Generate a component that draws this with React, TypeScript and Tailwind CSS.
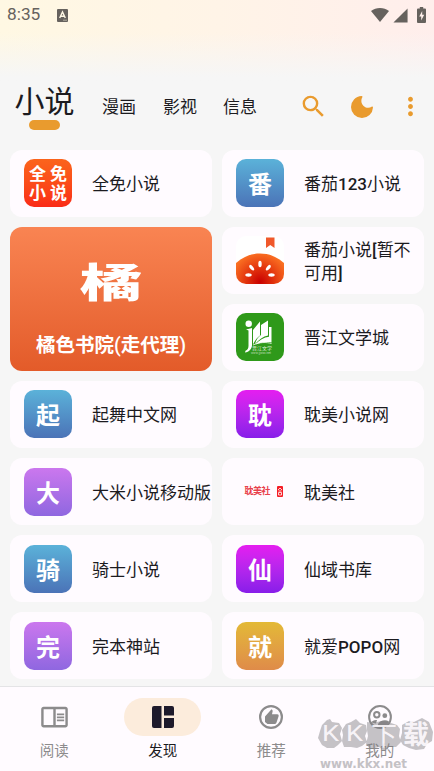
import type { ReactNode } from 'react';
import { MdMoreVert, MdOutlineChromeReaderMode, MdSearch, MdSignalCellular4Bar } from 'react-icons/md';

type Tone = 'blue' | 'magenta' | 'purple' | 'gold';

interface Source {
    // Name is split so that latin parts can use the heavier weight
    name: ReactNode;
    letter?: string;
    tone?: Tone;
    icon?: ReactNode;
}

const TONES: Record<Tone, string> = {
    blue: 'from-[#5bb2d9] to-[#4b73b7]',
    magenta: 'from-[#e51df0] to-[#881de9]',
    purple: 'from-[#cb77ee] to-[#8f67e0]',
    gold: 'from-[#e3b936] to-[#df8b49]',
};

const Latin = ({ children }: { children: ReactNode }) => <span className="font-medium">{children}</span>;

function QuanmianLogo() {
    return (
        <div className="grid size-[48px] grid-cols-2 content-center justify-items-center rounded-[10px] bg-linear-to-b from-[#fb641c] to-[#fa2a17] px-[3px] pt-[2px] text-[17px] leading-[19px] font-bold text-white">
            <span>全</span>
            <span>免</span>
            <span>小</span>
            <span>说</span>
        </div>
    );
}

function TomatoLogo() {
    return (
        <svg viewBox="0 0 48 48" className="size-[48px]">
            <defs>
                <radialGradient id="tomato" cx="24" cy="46" r="30" gradientUnits="userSpaceOnUse">
                    <stop offset="0" stopColor="#c90000" />
                    <stop offset="0.55" stopColor="#e63c10" />
                    <stop offset="1" stopColor="#fb7223" />
                </radialGradient>
                <clipPath id="tile">
                    <rect width="48" height="48" rx="10" />
                </clipPath>
            </defs>
            <g clipPath="url(#tile)">
                <rect width="48" height="48" fill="#fff" />
                <path d="M0 27C8 20 16 17.500 24 17.500S40 20 48 27V48H0Z" fill="url(#tomato)" />
            </g>
            <path d="M30 1.500h8.500v10.500l-4.250-3-4.250 3Z" fill="#f0582a" />
            <g fill="#fff">
                <ellipse cx="24" cy="28" rx="1.700" ry="3.200" />
                <ellipse cx="15.700" cy="31.700" rx="1.600" ry="3.300" transform="rotate(-40 15.700 31.700)" />
                <ellipse cx="32.300" cy="31.700" rx="1.600" ry="3.300" transform="rotate(40 32.300 31.700)" />
                <ellipse cx="12.500" cy="39" rx="3.200" ry="1.700" />
                <ellipse cx="35.500" cy="39" rx="3.200" ry="1.700" />
            </g>
        </svg>
    );
}

function JinjiangLogo() {
    return (
        <svg viewBox="0 0 48 48" className="size-[48px]">
            <rect width="48" height="48" rx="10" fill="#2f991a" />
            <circle cx="12.700" cy="10.800" r="3.200" fill="#fff" />
            <path d="M10 16.500l6-1.500v17c0 4-3 7-7 7.500l.5-1.700c2-.8 3-2.500 3-5V17.500Z" fill="#fff" />
            <path d="M17 17l7-8.500v14c-3 2-5 5-7 9Z" fill="#fff" />
            <path d="M25 12l7-4.500v15c-5 1-9 4-13 8.500 1-4 3-7 6-9Z" fill="#fff" />
            <path d="M33 14h2.500v15.500c-6-1-11 0-16 2C23 27 28 24.500 33 23.800Z" fill="#fff" />
            <path d="M17 32C24 29 30 29 35.500 30.500" fill="none" stroke="#fff" strokeWidth=".8" />
            <text x="16" y="37" fontSize="5" fill="#fff" fillOpacity=".85">晋江文学</text>
            <text x="15" y="40.500" fontSize="3" fill="#fff" fillOpacity=".7" textLength="20">www.jjwxc.net</text>
        </svg>
    );
}

function DanmeisheLogo() {
    return (
        <div className="flex size-[48px] items-center justify-end gap-[6px] pr-[1.500px]">
            <span className="w-[26px] text-[9px] leading-none font-bold tracking-[-0.500px] whitespace-nowrap text-[#e8414b]">
                耽美社
            </span>
            <svg viewBox="0 0 6 11" className="h-[11px] w-[6px]">
                <rect width="6" height="11" rx="1" fill="#f51d25" />
                <path d="M1 4l2-2 2 2M1.500 5h3M1.500 6.500h3v2.500h-3Z" fill="none" stroke="#fff" strokeWidth=".8" />
            </svg>
        </div>
    );
}

const ROWS: Source[] = [
    { name: '全免小说', icon: <QuanmianLogo /> },
    { name: <>番茄<Latin>123</Latin>小说</>, letter: '番', tone: 'blue' },
    { name: <>番茄小说<Latin>[</Latin>暂不可用<Latin>]</Latin></>, icon: <TomatoLogo /> },
    { name: '晋江文学城', icon: <JinjiangLogo /> },
    { name: '起舞中文网', letter: '起', tone: 'blue' },
    { name: '耽美小说网', letter: '耽', tone: 'magenta' },
    { name: '大米小说移动版', letter: '大', tone: 'purple' },
    { name: '耽美社', icon: <DanmeisheLogo /> },
    { name: '骑士小说', letter: '骑', tone: 'blue' },
    { name: '仙域书库', letter: '仙', tone: 'magenta' },
    { name: '完本神站', letter: '完', tone: 'purple' },
    { name: <>就爱<Latin>POPO</Latin>网</>, letter: '就', tone: 'gold' },
];

function SourceCard({ source }: { source: Source }) {
    return (
        <button className="flex items-center overflow-hidden rounded-[12px] bg-[#fffbff] pl-[14px] text-left">
            <div className="shrink-0">
                {source.icon ?? (
                    <div
                        className={`flex size-[48px] items-center justify-center rounded-[10px] bg-linear-to-b pt-[4px] text-[24px] leading-none font-bold text-white ${TONES[source.tone!]}`}
                    >
                        {source.letter}
                    </div>
                )}
            </div>
            <span className="ml-[20px] flex-1 pt-[3px] text-[17px] leading-[23px] text-[#1c1b1f]">{source.name}</span>
        </button>
    );
}

function FeaturedCard() {
    return (
        <button className="row-span-2 flex flex-col items-center rounded-[12px] bg-linear-to-b from-[#f98452] to-[#e35b29] text-white">
            <span className="mt-[35px] scale-x-[1.550] text-[40px] leading-[44px] font-black">橘</span>
            <span className="mt-[27px] text-[19.500px] leading-[26px] font-bold">
                橘色书院<span className="font-medium">(</span>走代理<span className="font-medium">)</span>
            </span>
        </button>
    );
}

function StatusBar() {
    return (
        <div className="flex h-[30px] items-center pr-[7px] pl-[7px] text-[#66625e]">
            <span className="text-[17.300px] leading-none">8:35</span>
            <svg viewBox="0 0 11 13" className="ml-[16.500px] h-[13px] w-[11px]">
                <rect width="11" height="13" rx="1" fill="currentColor" />
                <path d="M2.700 9L5.500 3l2.800 6M3.700 7.200h3.600" fill="none" stroke="#fff8e5" strokeWidth="1.400" />
                <path d="M6.500 11.200h1M8.500 11.200h1" stroke="#fff8e5" strokeWidth="1" />
            </svg>
            <div className="ml-auto flex items-center">
                <svg viewBox="0 0 18 14" className="h-[14px] w-[18px]">
                    <path d="M0 3C5-1 13-1 18 3L9 14Z" fill="currentColor" />
                </svg>
                <MdSignalCellular4Bar className="ml-[3px] size-[17px]" />
                <svg viewBox="0 0 9 16" className="mr-[1px] ml-[8px] h-[16px] w-[9px]">
                    <path d="M2.800 0h3.400v1.500H8a1 1 0 0 1 1 1V15a1 1 0 0 1-1 1H1a1 1 0 0 1-1-1V2.500a1 1 0 0 1 1-1h1.800Z" fill="currentColor" />
                    <path d="M5.200 4L2.200 9.500h2V13.500l3-5.700h-2Z" fill="#fff0ec" />
                </svg>
            </div>
        </div>
    );
}

function TopTabs() {
    return (
        <div className="flex h-[68px] items-start pt-[2px] text-[#1c1b1f]">
            <div className="ml-[14px] flex w-[61px] flex-col items-center">
                <span className="text-[30px] leading-[38px]">小说</span>
                <div className="-mt-px h-[10px] w-[31px] rounded-full bg-[#e99b2e]" />
            </div>
            <span className="mt-[12px] ml-[27px] text-[17px] leading-[24px]">漫画</span>
            <span className="mt-[12px] ml-[27px] text-[17px] leading-[24px]">影视</span>
            <span className="mt-[12px] ml-[26px] text-[17px] leading-[24px]">信息</span>
            <div className="mt-[9px] ml-auto flex items-center pr-[9px] text-[#e99b2e]">
                <MdSearch className="size-[29px]" />
                <svg viewBox="0 0 22 22" className="ml-[23px] size-[22px]">
                    <path
                        d="M10.500 0A11 11 0 1 0 22 11.500C22 10.500 21.200 10.400 20.600 10.800C18.500 12.200 15 12.300 12.600 9.900C10 7.400 9.800 4.200 11.200 1.600C11.700.8 11.500 0 10.500 0Z"
                        fill="currentColor"
                    />
                </svg>
                <MdMoreVert className="ml-[23px] size-[29px]" />
            </div>
        </div>
    );
}

function NavItem({ label, active, children }: { label: string; active?: boolean; children: ReactNode }) {
    return (
        <button className={`flex flex-1 flex-col items-center pt-[11px] ${active ? 'text-[#1c1b1f]' : 'text-[#8c8b8c]'}`}>
            <div className={`flex h-[38px] w-[77px] items-center justify-center rounded-full ${active ? 'bg-[#fcecdc]' : ''}`}>
                {children}
            </div>
            <span className="mt-[6px] text-[14.500px] leading-[20px]">{label}</span>
        </button>
    );
}

function BottomNav() {
    return (
        <nav className="flex h-[85px] border-t border-[#e4e4e6] bg-[#fffbff]">
            <NavItem label="阅读">
                <MdOutlineChromeReaderMode className="mb-[2px] size-[29px]" />
            </NavItem>
            <NavItem label="发现" active>
                <svg viewBox="0 0 22 22" className="size-[22px]" fill="#1e1a2b">
                    <path d="M2 0H9.500V22H2a2 2 0 0 1-2-2V2a2 2 0 0 1 2-2Z" />
                    <path d="M12 0h8a2 2 0 0 1 2 2V9.500H12Z" />
                    <path d="M12 12H22v8a2 2 0 0 1-2 2H12Z" />
                </svg>
            </NavItem>
            <NavItem label="推荐">
                <svg viewBox="0 0 24 24" className="size-[24px]">
                    <circle cx="12" cy="12" r="10.900" fill="none" stroke="currentColor" strokeWidth="2.200" />
                    <path d="M6 11.500L12.500 4.200c.9.500 1.300 1.200 1.100 2.200L13 9.300h5.300c1.100 0 1.600.8 1.300 1.900l-2 6c-.4 1.200-1 1.800-2.100 1.800H8.500L6 17Z" fill="currentColor" />
                </svg>
            </NavItem>
            <NavItem label="我的">
                <svg viewBox="0 0 24 24" className="size-[24px]">
                    <g fill="none" stroke="currentColor" strokeWidth="2">
                        <circle cx="12" cy="12" r="10.900" />
                        <circle cx="8.800" cy="9.700" r="2.700" />
                    </g>
                    <circle cx="16.800" cy="10.700" r="2.400" fill="currentColor" />
                    <path d="M3 17.500c1.500-2 3.500-2.800 6-2.500l-1 3.500ZM10 19c1.500-3 7-5 11-2.500-2 4-5 6-8 6-2 0-3-1.500-3-3.500Z" fill="currentColor" />
                </svg>
            </NavItem>
        </nav>
    );
}

function SiteMark() {
    return (
        <div className="pointer-events-none absolute top-[717px] left-[317px] h-[54px] w-[117px]">
            <svg viewBox="0 0 117 54" className="h-[54px] w-[117px]">
                <g fill="#817f82" fillOpacity=".46">
                    <path d="M5 8l5-5 3-1 2 3 7 1 3 5-2 6 2 7-4 4-4 3-7 0-5-3-4-7 2-7Z" />
                    <path d="M29 7l5-2 5-3 4 4 6 2 1 6-2 5 2 6-5 4-5 2-6-1-7 0-2-6 1-6-1-5Z" />
                    <path d="M50 5l6 1 8-2 7 1 9 3 3 4-1 7 2 6-5 5-7 0-5 4-5-4-9 2-4-5 2-8-1-6Z" />
                    <path d="M85 8l7-4 5 1 8-4 7 4 2 5 2 5-1 9-5 3-3 5-8 1-7-2-6-3-3-5 2-7Z" />
                </g>
                <g fill="#fffbff" fillOpacity=".9">
                    <text x="5" y="24" fontSize="22" textLength="17" lengthAdjust="spacingAndGlyphs">K</text>
                    <text x="29" y="24" fontSize="22" textLength="17" lengthAdjust="spacingAndGlyphs">K</text>
                    <text x="54" y="28" fontSize="26">下</text>
                    <text x="86" y="27" fontSize="26" fontWeight="700">载</text>
                </g>
                <text x="3" y="51" fontSize="12" fontWeight="700" fontFamily="DejaVu Sans" fill="#c4c1c5" textLength="87" lengthAdjust="spacingAndGlyphs">
                    www.kkx.net
                </text>
            </svg>
        </div>
    );
}

export default function App() {
    return (
        <div className="relative flex h-[771px] w-[434px] flex-col overflow-hidden bg-[#f6f6f6] font-[Roboto,'Noto_Sans_CJK_SC',sans-serif]">
            <header className="bg-linear-to-r from-[#fff8e3] via-[#fff4e7] to-[#ffeeec]">
                <div className="bg-linear-to-b from-[#f6f6f6]/0 from-40% to-[#f6f6f6] to-95%">
                    <StatusBar />
                    <div className="h-[51px]" />
                </div>
            </header>
            <TopTabs />
            <main className="grid flex-1 auto-rows-[67.300px] grid-cols-2 gap-x-[10px] gap-y-[9.800px] px-[10px] pt-[0.500px]">
                {ROWS.slice(0, 2).map((source, i) => (
                    <SourceCard key={i} source={source} />
                ))}
                <FeaturedCard />
                {ROWS.slice(2).map((source, i) => (
                    <SourceCard key={i} source={source} />
                ))}
            </main>
            <BottomNav />
            <SiteMark />
        </div>
    );
}
